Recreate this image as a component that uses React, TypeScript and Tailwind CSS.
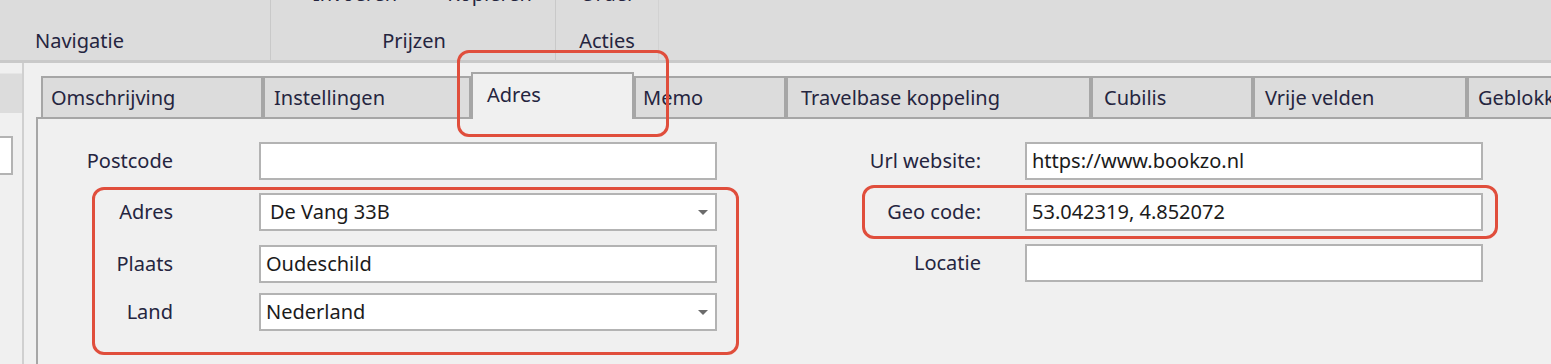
import React from "react";

type Tab = { label: string; w: number; pl: number; selected?: boolean };

const tabs: Tab[] = [
  { label: "Omschrijving", w: 222, pl: 8 },
  { label: "Instellingen", w: 208, pl: 9 },
  { label: "Adres", w: 163, pl: 14, selected: true },
  { label: "Memo", w: 152, pl: 7 },
  { label: "Travelbase koppeling", w: 305, pl: 13 },
  { label: "Cubilis", w: 162, pl: 11 },
  { label: "Vrije velden", w: 214, pl: 10 },
  { label: "Geblokkeerd", w: 220, pl: 9 },
];

function Arrow() {
  return (
    <svg width="10" height="5" viewBox="0 0 10 5" className="shrink-0">
      <polygon points="0,0 10,0 5,5" fill="#6b6b6b" />
    </svg>
  );
}

function Field({
  value,
  combo,
  pl,
  w,
}: {
  value?: string;
  combo?: boolean;
  pl: string;
  w: string;
}) {
  return (
    <div
      className={`h-[38px] ${w} bg-white border-2 border-[#b3b3b3] flex items-center justify-between pr-[7px] text-[#1b1b1b]`}
    >
      <span className={pl}>{value}</span>
      {combo && <Arrow />}
    </div>
  );
}

export default function App() {
  return (
    <div className="relative w-[1551px] h-[364px] overflow-hidden bg-[#f0f0f0] font-['Noto_Sans',sans-serif] text-[20px] leading-[24px] text-[#25253f]">
      {/* Ribbon */}
      <div className="h-[63px] bg-[#dcdcdc] border-b-[3px] border-[#c9c9c9] flex">
        <div className="w-[271px] shrink-0 border-r border-[#c9c9c9] flex flex-col justify-end pb-[7px] pl-[35px]">
          <span>Navigatie</span>
        </div>
        <div className="w-[285px] shrink-0 border-r border-[#c9c9c9] flex flex-col justify-between pb-[7px]">
          <div className="-mt-[18px] flex pl-[42px] gap-[50px]">
            <span>Invoeren</span>
            <span>Kopiëren</span>
          </div>
          <div className="text-center pl-[2px]">Prijzen</div>
        </div>
        <div className="w-[103px] shrink-0 border-r border-[#d2d2d2] flex flex-col justify-between pb-[7px]">
          <div className="-mt-[18px] pl-[24px]">Order</div>
          <div className="text-center">Acties</div>
        </div>
        <div className="flex-1" />
      </div>

      {/* Body */}
      <div className="flex h-[301px]">
        {/* left side panel */}
        <div className="w-[24px] shrink-0 border-r-2 border-[#d0d0d0] flex flex-col">
          <div className="mt-[10px] h-[40px] bg-[#dcdcdc] border-t border-[#e6e6e6]" />
          <div className="mt-[23px] w-[13px] h-[39px] bg-white border-2 border-l-0 border-[#b3b3b3]" />
        </div>

        {/* main */}
        <div className="flex-1 pl-[12px] flex flex-col min-w-0">
          {/* tabs */}
          <div className="h-[54px] flex items-end pl-[5px] shrink-0">
            {tabs.map((t) =>
              t.selected ? (
                <div
                  key={t.label}
                  style={{ width: t.w, paddingLeft: t.pl }}
                  className="relative z-10 shrink-0 h-[47px] -mb-[2px] bg-[#f0f0f0] border-2 border-b-0 border-[#a6a6a6] flex items-center pb-[4px]"
                >
                  {t.label}
                </div>
              ) : (
                <div
                  key={t.label}
                  style={{ width: t.w, paddingLeft: t.pl }}
                  className="shrink-0 h-[41px] bg-[#dcdcdc] border-2 border-b-0 border-[#a6a6a6] flex items-center whitespace-nowrap overflow-hidden"
                >
                  {t.label}
                </div>
              )
            )}
          </div>

          {/* panel */}
          <div className="flex-1 border-l-2 border-t-2 border-[#a6a6a6] bg-[#f0f0f0] pt-[23px] flex">
            {/* left form column */}
            <div className="flex flex-col w-[679px] shrink-0">
              <div className="flex items-center">
                <div className="w-[135px] text-right">Postcode</div>
                <div className="ml-[86px]">
                  <Field w="w-[458px]" pl="pl-[5px]" />
                </div>
              </div>
              <div className="flex items-center mt-[13px]">
                <div className="w-[135px] text-right">Adres</div>
                <div className="ml-[86px]">
                  <Field w="w-[458px]" pl="pl-[9px]" value="De Vang 33B" combo />
                </div>
              </div>
              <div className="flex items-center mt-[14px]">
                <div className="w-[135px] text-right">Plaats</div>
                <div className="ml-[86px]">
                  <Field w="w-[458px]" pl="pl-[5px]" value="Oudeschild" />
                </div>
              </div>
              <div className="flex items-center mt-[10px]">
                <div className="w-[135px] text-right">Land</div>
                <div className="ml-[86px]">
                  <Field w="w-[458px]" pl="pl-[5px]" value="Nederland" combo />
                </div>
              </div>
            </div>

            {/* right form column */}
            <div className="flex flex-col">
              <div className="flex items-center">
                <div className="w-[264px] text-right">Url website:</div>
                <div className="ml-[44px]">
                  <Field w="w-[458px]" pl="pl-[5px]" value="https://www.bookzo.nl" />
                </div>
              </div>
              <div className="flex items-center mt-[13px]">
                <div className="w-[264px] text-right">Geo code:</div>
                <div className="ml-[44px]">
                  <Field w="w-[458px]" pl="pl-[5px]" value="53.042319, 4.852072" />
                </div>
              </div>
              <div className="flex items-center mt-[13px]">
                <div className="w-[264px] text-right">Locatie</div>
                <div className="ml-[44px]">
                  <Field w="w-[458px]" pl="pl-[5px]" />
                </div>
              </div>
            </div>
          </div>
        </div>
      </div>

      {/* Annotation highlights */}
      <div className="absolute left-[457px] top-[50px] w-[212px] h-[87px] border-[3px] border-[#e04e3c] rounded-[12px] z-20 pointer-events-none" />
      <div className="absolute left-[92px] top-[187px] w-[647px] h-[168px] border-[3px] border-[#e04e3c] rounded-[12px] z-20 pointer-events-none" />
      <div className="absolute left-[862px] top-[185px] w-[636px] h-[54px] border-[3px] border-[#e04e3c] rounded-[12px] z-20 pointer-events-none" />
    </div>
  );
}
